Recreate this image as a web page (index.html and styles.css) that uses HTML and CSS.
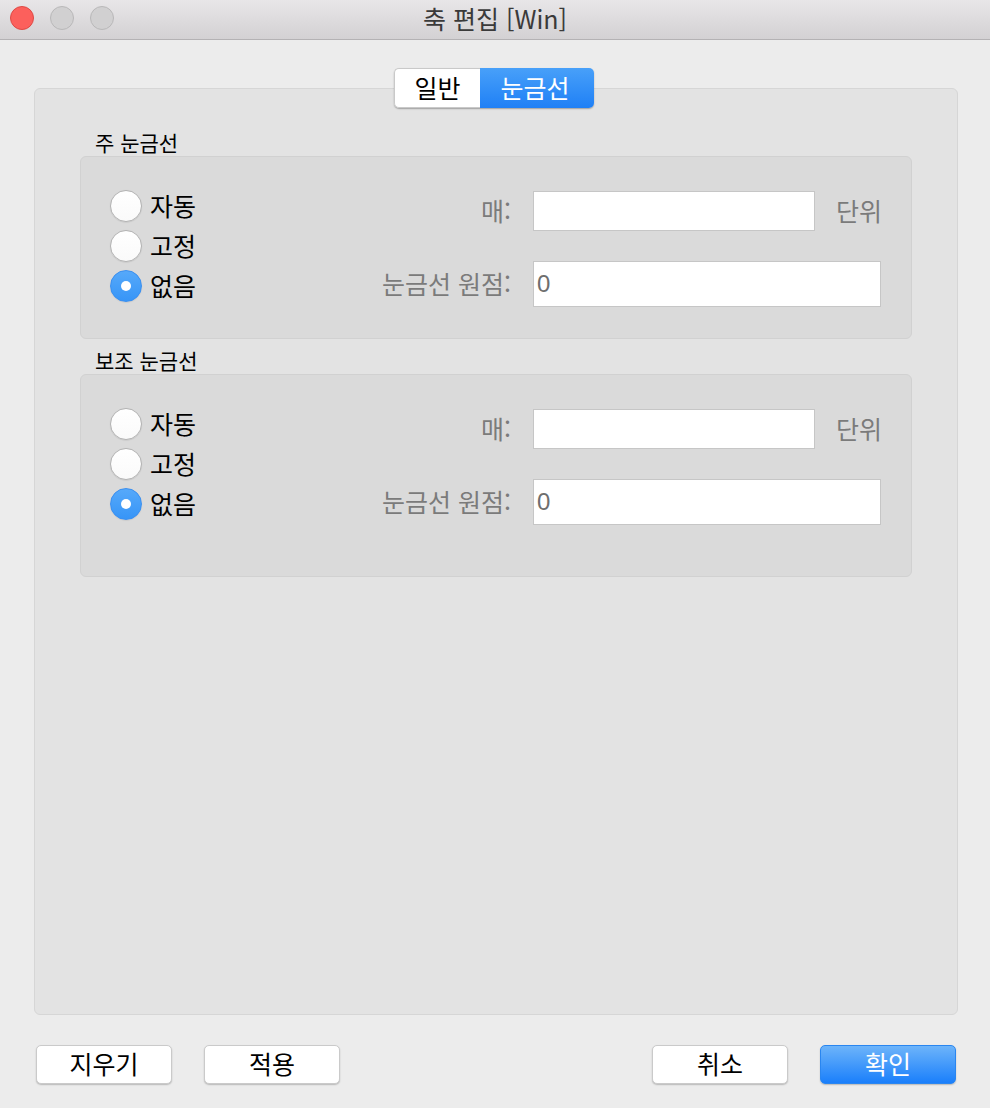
FILE: index.html
```html
<!DOCTYPE html>
<html lang="ko">
<head>
<meta charset="utf-8">
<title>축 편집 [Win]</title>
<link rel="stylesheet" href="styles.css">
</head>
<body>
<div class="window">
  <div class="titlebar">
    <div class="lights">
      <span class="light light-close"></span>
      <span class="light light-min"></span>
      <span class="light light-max"></span>
    </div>
    <div class="title">축 편집 [Win]</div>
  </div>
  <div class="content">
    <div class="tabs">
      <div class="tab tab-general">일반</div>
      <div class="tab tab-grid active">눈금선</div>
    </div>
    <div class="panel">
      <div class="group-label">주 눈금선</div>
      <div class="group">
        <div class="radios">
          <div class="radio-row"><span class="radio"></span><span class="radio-text">자동</span></div>
          <div class="radio-row"><span class="radio"></span><span class="radio-text">고정</span></div>
          <div class="radio-row"><span class="radio checked"></span><span class="radio-text">없음</span></div>
        </div>
        <div class="form">
          <div class="flabel">매:</div>
          <div class="input input-short"></div>
          <div class="unit">단위</div>
          <div class="flabel flabel-tall">눈금선 원점:</div>
          <div class="input input-wide">0</div>
        </div>
      </div>
      <div class="group-label group-label-2">보조 눈금선</div>
      <div class="group group-2">
        <div class="radios">
          <div class="radio-row"><span class="radio"></span><span class="radio-text">자동</span></div>
          <div class="radio-row"><span class="radio"></span><span class="radio-text">고정</span></div>
          <div class="radio-row"><span class="radio checked"></span><span class="radio-text">없음</span></div>
        </div>
        <div class="form">
          <div class="flabel">매:</div>
          <div class="input input-short"></div>
          <div class="unit">단위</div>
          <div class="flabel flabel-tall">눈금선 원점:</div>
          <div class="input input-wide">0</div>
        </div>
      </div>
    </div>
    <div class="footer">
      <div class="btn-group">
        <button class="btn">지우기</button>
        <button class="btn">적용</button>
      </div>
      <div class="btn-group">
        <button class="btn">취소</button>
        <button class="btn btn-primary">확인</button>
      </div>
    </div>
  </div>
</div>
</body>
</html>
```

FILE: styles.css
```css
* { box-sizing: border-box; }
html, body {
  margin: 0;
  padding: 0;
  background: #ececec;
}
body {
  font-family: "Noto Sans CJK KR", "Noto Sans", "Liberation Sans", sans-serif;
  color: #000;
}
.window {
  width: 990px;
  height: 1108px;
  display: flex;
  flex-direction: column;
  background: #ececec;
}
.titlebar {
  height: 40px;
  flex: none;
  display: flex;
  align-items: center;
  background: linear-gradient(#e8e6e8, #d3d1d3);
  border-bottom: 1px solid #b4b2b4;
  position: relative;
}
.lights {
  display: flex;
  gap: 16px;
  padding-left: 10px;
  padding-bottom: 4px;
}
.light {
  width: 24px;
  height: 24px;
  border-radius: 50%;
  display: block;
}
.light-close {
  background: #fc605c;
  border: 1px solid #de4a45;
}
.light-min, .light-max {
  background: #d1d0d1;
  border: 1px solid #b9b8b9;
}
.title {
  position: absolute;
  left: 0;
  right: 0;
  top: 0;
  height: 39px;
  display: flex;
  align-items: center;
  justify-content: center;
  font-size: 25px;
  line-height: 1;
  color: #3a3a3a;
  pointer-events: none;
  padding-bottom: 2px;
}
.content {
  flex: 1;
  display: flex;
  flex-direction: column;
  padding: 28px 32px 24px 34px;
}
.tabs {
  display: flex;
  align-self: center;
  margin-right: 4px;
  margin-bottom: -20px;
  height: 40px;
  position: relative;
  z-index: 1;
  border-radius: 5px;
  box-shadow: 0 1px 1.5px rgba(0,0,0,0.3);
}
.tab {
  height: 40px;
  display: flex;
  align-items: center;
  justify-content: center;
  font-size: 25px;
  line-height: 1;
  padding-bottom: 2px;
}
.tab-general {
  width: 86px;
  background: #fff;
  border: 1px solid #c9c9c9;
  border-right: none;
  border-radius: 5px 0 0 5px;
  color: #000;
}
.tab-grid {
  width: 114px;
  background: linear-gradient(#48a0f9, #1f80f6);
  color: #fff;
  border-radius: 0 5px 5px 0;
  padding-right: 4px;
}
.panel {
  flex: 1;
  background: #e3e3e3;
  border: 1px solid #d6d6d6;
  border-radius: 6px;
  padding: 41px 45px 0 45px;
  display: flex;
  flex-direction: column;
}
.group-label {
  font-size: 21px;
  line-height: 24px;
  height: 24px;
  padding-left: 15px;
  margin-bottom: 2px;
}
.group-label-2 {
  margin-top: 9px;
}
.group {
  background: #dadada;
  border: 1px solid #d1d1d1;
  border-radius: 6px;
  display: flex;
  padding: 29px 0 31px 29px;
}
.group-2 {
  padding-bottom: 51px;
}
.radios {
  width: 250px;
  display: flex;
  flex-direction: column;
}
.radio-row {
  height: 40px;
  display: flex;
  align-items: center;
}
.radio {
  width: 32px;
  height: 32px;
  border-radius: 50%;
  background: linear-gradient(#ffffff, #fafafa);
  border: 1px solid #b3b3b3;
  box-shadow: 0 0.5px 1px rgba(0,0,0,0.12);
  display: flex;
  align-items: center;
  justify-content: center;
  flex: none;
}
.radio.checked {
  background: linear-gradient(#56a9fa, #3795f7);
  border-color: #3a8ff0;
}
.radio.checked::after {
  content: "";
  width: 10px;
  height: 10px;
  border-radius: 50%;
  background: #fff;
}
.radio-text {
  font-size: 25px;
  margin-left: 8px;
  line-height: 1;
  padding-bottom: 2px;
}
.form {
  display: grid;
  grid-template-columns: 152px 282px 45px;
  grid-template-rows: 40px 46px;
  column-gap: 21px;
  row-gap: 30px;
  padding-top: 5px;
  align-items: center;
}
.flabel {
  font-size: 25px;
  line-height: 1;
  color: #7b7b7b;
  text-align: right;
  padding-right: 1px;
  padding-bottom: 2px;
  white-space: nowrap;
}
.unit {
  font-size: 25px;
  line-height: 1;
  color: #7b7b7b;
  white-space: nowrap;
  padding-bottom: 2px;
}
.input {
  background: #fff;
  border: 1px solid #c6c6c6;
  height: 100%;
  font-size: 24px;
  color: #6e6e6e;
  display: flex;
  align-items: center;
  padding-left: 3px;
  font-family: "Liberation Sans", "Noto Sans CJK KR", sans-serif;
}
.input-wide {
  grid-column: 2 / 4;
}
.footer {
  display: flex;
  justify-content: space-between;
  margin-top: 30px;
  padding-left: 2px;
  margin-right: 2px;
}
.btn-group {
  display: flex;
  gap: 32px;
}
.btn {
  width: 136px;
  height: 39px;
  font-family: "Noto Sans CJK KR", "Noto Sans", sans-serif;
  font-size: 25px;
  line-height: 1;
  background: #fff;
  border: 1px solid #cacaca;
  border-radius: 5px;
  box-shadow: 0 1px 1.5px rgba(0,0,0,0.22);
  color: #000;
  padding: 0 0 3px 0;
  display: flex;
  align-items: center;
  justify-content: center;
}
.btn-primary {
  background: linear-gradient(#6db4fa, #1a7ffb);
  border: 1px solid #2a86f0;
  color: #fff;
}
```
